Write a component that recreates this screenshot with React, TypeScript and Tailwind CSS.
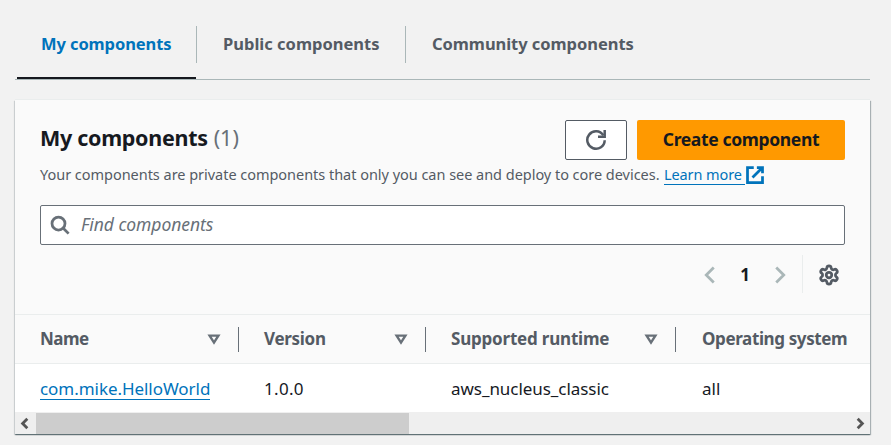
import React from "react";
import { Settings } from "lucide-react";

const columns = [
  { label: "Name", value: "com.mike.HelloWorld", width: "w-[224px] pl-[25px]", head: "tracking-[-0.5px]", cell: "tracking-[-0.05px]", sortable: true },
  { label: "Version", value: "1.0.0", width: "w-[187px] pl-[25px]", head: "tracking-[-0.3px]", cell: "tracking-[0.3px]", sortable: true },
  { label: "Supported runtime", value: "aws_nucleus_classic", width: "w-[250px] pl-[25px]", head: "tracking-[-0.2px]", cell: "tracking-[-0.05px]", sortable: true },
  { label: "Operating system", value: "all", width: "flex-1 pl-[26px]", head: "tracking-[-0.38px]", cell: "tracking-[0px]", sortable: false },
];

function Chevron({ d, className, size, stroke }: { d: string; className: string; size: number; stroke: number }) {
  return (
    <svg width={size} height={size} viewBox="0 0 16 16" fill="none" stroke="currentColor" strokeWidth={stroke} className={className}>
      <path d={d} />
    </svg>
  );
}

export default function App() {
  return (
    <div className="h-[445px] w-[891px] overflow-hidden whitespace-nowrap bg-[#f2f2f2] font-['Noto_Sans',sans-serif] text-[#16191f]">
      <nav className="ml-[15px] flex h-20 w-[855px] border-b border-[#aab7b8] pt-[26px] text-[16.5px] font-bold leading-[36px] text-[#545b64]">
        <div className="ml-[2px] flex h-[53px] w-[179px] items-start border-b-2 border-[#16191f] pl-6 text-[#0073bb]">
          <span className="tracking-[-0.1px]">My components</span>
        </div>
        <div className="h-[37px] w-[210px] border-l border-r border-[#aab7b8] pl-[26px]">
          <span className="tracking-[0px]">Public components</span>
        </div>
        <div className="pl-[26px]">
          <span className="tracking-[-0.05px]">Community components</span>
        </div>
      </nav>
      <main className="ml-[15px] mt-[20px] flex h-[334px] w-[855px] flex-col bg-white shadow-[0_1px_1px_0_rgba(0,28,36,0.4),1px_1px_1px_0_rgba(0,28,36,0.25),-1px_1px_1px_0_rgba(0,28,36,0.1),0_-1px_0_0_#eaeded]">
        <header className="h-[215px] border-b border-[#eaeded] bg-[#fafafa] pl-[25px] pr-[25px] pt-[20px]">
          <div className="flex h-10 items-center justify-between">
            <h1 className="-mt-[4px] flex gap-[6px] text-[21.5px] font-bold leading-8">
              <span className="tracking-[-0.3px]">My components</span>
              <span className="font-normal text-[#687078]">(1)</span>
            </h1>
            <div className="flex gap-[10px]">
              <button className="flex h-10 w-[62px] items-center justify-center rounded-[2px] border border-[#545b64] bg-white">
                <svg width="22" height="22" viewBox="0 0 22 22" fill="none" stroke="#545b64" strokeWidth="2.5">
                  <path d="M19.7 1v6.8H13" />
                  <path d="M19.7 11.2A8.7 8.7 0 1 1 18.3 6.3" />
                </svg>
              </button>
              <button className="h-10 w-[208px] rounded-[2px] bg-[#ff9900] text-[17.5px] font-bold text-[#16191f]">
                <span className="relative -top-px tracking-[-0.35px]">Create component</span>
              </button>
            </div>
          </div>
          <p className="flex h-[30px] items-center text-[14.5px] text-[#545b64]">
            <span className="w-[620px] tracking-[-0.03px]">Your components are private components that only you can see and deploy to core devices.</span>
            <a className="ml-1 flex items-center text-[#0073bb]">
              <span className="h-5 w-[81px] border-b border-[#0073bb] leading-[19px] tracking-[-0.1px]">Learn more</span>
              <svg width="20" height="20" viewBox="0 0 16 16" fill="none" stroke="currentColor" strokeWidth="2.2">
                <path d="M9.5 2H14v4.5M6 10l8-8M14 9.05V14H2V2h5" />
              </svg>
            </a>
          </p>
          <div className="mt-[15px] flex h-10 items-center rounded-[2px] border border-[#687078] bg-white pl-[9px]">
            <svg width="20" height="20" viewBox="0 0 16 16" fill="none" stroke="#687078" strokeWidth="2.2">
              <circle cx="6.8" cy="6.8" r="5.2" />
              <path d="m10.6 10.6 4.3 4.3" />
            </svg>
            <span className="-mt-px ml-[11px] text-[17.5px] italic tracking-[-0.05px] text-[#687078]">Find components</span>
          </div>
          <div className="mt-[10px] flex h-10 items-center justify-end">
            <Chevron d="M11 2 5 8l6 6" size={20} stroke={2.2} className="text-[#aab7b8]" />
            <span className="w-[50px] text-center text-[17px] font-bold">1</span>
            <Chevron d="m5 2 6 6-6 6" size={20} stroke={2.2} className="text-[#aab7b8]" />
            <div className="-mt-[2px] ml-[12px] flex h-[38px] w-[43px] items-center border-l border-[#eaeded] pl-[15px] pt-[2px]">
              <Settings size={22} strokeWidth={3} color="#545b64" />
            </div>
          </div>
        </header>
        <div className="flex h-[49px] border-b border-[#eaeded] bg-[#fafafa] text-[17px] font-bold text-[#545b64]">
          {columns.map((c) => (
            <div key={c.label} className={`flex items-center ${c.width}`}>
              <span className={c.head}>{c.label}</span>
              {c.sortable && (
                <div className="ml-auto flex h-[25px] w-[32px] items-center border-r border-[#687078]">
                  <svg width="14" height="11" viewBox="0 0 14 11" fill="none" stroke="#687078" strokeWidth="2.4">
                    <path d="M2.6 1.6h8.8L7 8.6z" />
                  </svg>
                </div>
              )}
            </div>
          ))}
        </div>
        <div className="flex h-12 text-[17px]">
          {columns.map((c, i) => (
            <div key={c.label} className={`flex items-center ${c.width}`}>
              <span className={`${c.cell} ${i === 0 ? "h-[23px] border-b border-[#0073bb] leading-[23px] text-[#0073bb]" : "mt-px"}`}>{c.value}</span>
            </div>
          ))}
        </div>
        <div className="flex h-[22px] items-center bg-[#efefef] text-[#555]">
          <div className="flex w-[21px] justify-center">
            <Chevron d="M11 3 6 8l5 5" size={15} stroke={3} className="mr-[2px]" />
          </div>
          <div className="mt-[1px] h-[21px] w-[373px] bg-[#cdcdcd]" />
          <div className="ml-auto flex w-[21px] justify-center">
            <Chevron d="m5 3 5 5-5 5" size={15} stroke={3} className="ml-[2px]" />
          </div>
        </div>
      </main>
    </div>
  );
}
